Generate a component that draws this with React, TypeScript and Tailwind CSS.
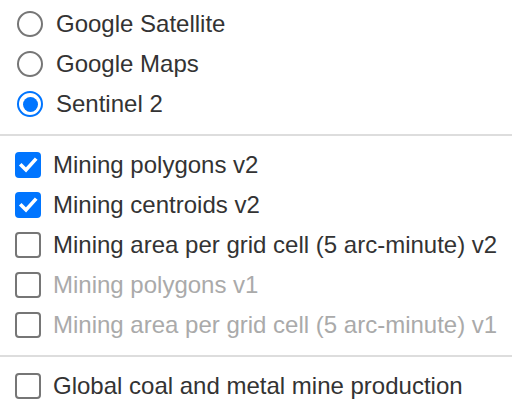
import React from 'react';

const baseLayers = [
  { name: 'Google Satellite', checked: false },
  { name: 'Google Maps', checked: false },
  { name: 'Sentinel 2', checked: true },
];

const overlays = [
  { name: 'Mining polygons v2', checked: true, disabled: false },
  { name: 'Mining centroids v2', checked: true, disabled: false },
  { name: 'Mining area per grid cell (5 arc-minute) v2', checked: false, disabled: false },
  { name: 'Mining polygons v1', checked: false, disabled: true },
  { name: 'Mining area per grid cell (5 arc-minute) v1', checked: false, disabled: true },
];

const Radio = ({ checked }: { checked: boolean }) => (
  <span
    className={`flex h-[26px] w-[26px] shrink-0 items-center justify-center rounded-full border-2 bg-white ${
      checked ? 'border-[#0075ff]' : 'border-[#767676]'
    }`}
  >
    {checked && <span className="h-[15px] w-[15px] rounded-full bg-[#0075ff]" />}
  </span>
);

const Checkbox = ({ checked }: { checked: boolean }) =>
  checked ? (
    <span className="flex h-[26px] w-[26px] shrink-0 items-center justify-center rounded-[4px] bg-[#0075ff]">
      <svg width="26" height="26" viewBox="0 0 26 26" fill="none">
        <path d="M6.5 13.5 L11 18 L20 8" stroke="white" strokeWidth="3.6" strokeLinecap="square" />
      </svg>
    </span>
  ) : (
    <span className="h-[26px] w-[26px] shrink-0 rounded-[4px] border-2 border-[#767676] bg-white" />
  );

const Divider = () => <div className="mt-[10px] mb-[9px] h-[2px] bg-[#dddddd]" />;

export default function App() {
  return (
    <div className="h-[417px] w-[512px] overflow-hidden bg-white pt-[4px] font-['Liberation_Sans',Arial,sans-serif] text-[24px] text-[#333333]">
      <div className="flex flex-col">
        {baseLayers.map((layer) => (
          <label key={layer.name} className="flex h-[40px] items-center pl-[17px]">
            <Radio checked={layer.checked} />
            <span className="ml-[13px] whitespace-nowrap">{layer.name}</span>
          </label>
        ))}
      </div>

      <Divider />

      <div className="flex flex-col">
        {overlays.map((layer) => (
          <label key={layer.name} className="flex h-[40px] items-center pl-[15px]">
            <Checkbox checked={layer.checked} />
            <span className={`ml-[12px] whitespace-nowrap ${layer.disabled ? 'text-[#aaaaaa]' : ''}`}>
              {layer.name}
            </span>
          </label>
        ))}
      </div>

      <Divider />

      <label className="flex h-[40px] items-center pl-[15px]">
        <Checkbox checked={false} />
        <span className="ml-[12px] whitespace-nowrap">Global coal and metal mine production</span>
      </label>
    </div>
  );
}
